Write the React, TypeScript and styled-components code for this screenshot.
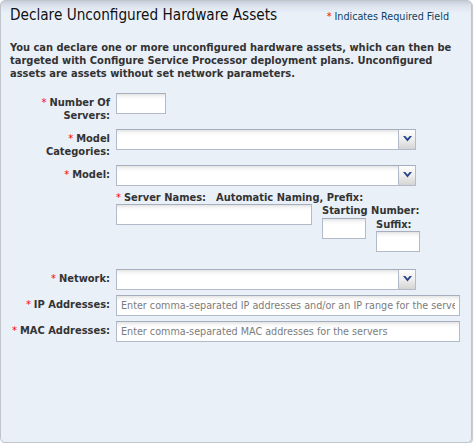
import React from "react";
import styled, { createGlobalStyle } from "styled-components";

const GlobalStyle = createGlobalStyle`
  html, body { margin: 0; padding: 0; background: #ffffff; }
  body { font-family: "DejaVu Sans Condensed", "DejaVu Sans", sans-serif; }
  * { box-sizing: border-box; }
`;

const FONT = `"DejaVu Sans Condensed", "DejaVu Sans", sans-serif`;

const Panel = styled.section`
  width: 472px;
  height: 443px;
  border: 1px solid #c0c4cb;
  border-radius: 5px;
  box-shadow: 1px 1px 1px rgba(0, 0, 0, 0.22);
  background: linear-gradient(to bottom, #c6ceda 0px, #dce3ed 5px, #eaf0f8 12px, #eaf0f8 100%);
  font-family: ${FONT};
  color: #333333;
  overflow: hidden;
`;

const Header = styled.header`
  display: flex;
  justify-content: space-between;
  align-items: baseline;
  padding: 5px 22px 0 9px;
`;

const Title = styled.h1`
  margin: 0;
  font-family: ${FONT};
  font-weight: normal;
  font-size: 15.2px;
  line-height: 18px;
  color: #111111;
`;

const RequiredNote = styled.div`
  font-size: 10.7px;
  line-height: 13px;
  color: #0e3f63;
`;

const Star = styled.span`
  color: #ff0000;
  font-weight: normal;
  margin-right: 3px;
`;

const Intro = styled.p`
  margin: 16.5px 0 0 9px;
  max-width: 452px;
  font-size: 11px;
  font-weight: bold;
  line-height: 13.3px;
  color: #333333;
`;

const Form = styled.div`
  display: grid;
  grid-template-columns: 109px 1fr;
  column-gap: 6px;
  row-gap: 5px;
  margin-top: 12.6px;
  align-items: start;
`;

const Label = styled.label`
  text-align: right;
  font-size: 11px;
  font-weight: bold;
  line-height: 13.3px;
  padding: 3px 0 1.4px;
  color: #333333;
`;

const FieldCell = styled.div`
  display: flex;
  min-width: 0;
`;

const TextInput = styled.input<{ $w: number }>`
  width: ${(p) => p.$w}px;
  height: 21px;
  margin: 0;
  padding: 0 4px;
  border: 1px solid #b3bac9;
  border-top-color: #a6adbd;
  border-radius: 0;
  background: linear-gradient(to bottom, #e4e4e4 0px, #f8f8f8 3px, #ffffff 6px);
  font-family: ${FONT};
  font-size: 10.7px;
  color: #333333;
  outline: none;
  &::placeholder {
    color: #7c7c7c;
    opacity: 1;
  }
`;

const SelectBox = styled.div`
  display: flex;
  width: 300px;
  height: 21px;
  border: 1px solid #b3bac9;
  border-top-color: #a6adbd;
  background: linear-gradient(to bottom, #e4e4e4 0px, #f8f8f8 3px, #ffffff 6px);
`;

const SelectValue = styled.div`
  flex: 1;
`;

const SelectButton = styled.div`
  width: 17px;
  border-left: 1px solid #b3bac9;
  background: linear-gradient(to bottom, #fdfdfd 0%, #eeeeee 50%, #d4d4d4 100%);
  display: flex;
  align-items: center;
  justify-content: center;
`;

const NamingBlock = styled.div`
  display: flex;
  flex-direction: column;
  padding-bottom: 12px;
`;

const NamingHeader = styled.div`
  display: flex;
  gap: 10px;
  font-size: 11px;
  font-weight: bold;
  line-height: 13.3px;
  white-space: nowrap;
`;

const NamingRow = styled.div`
  display: flex;
  align-items: flex-start;
  gap: 10px;
`;

const NamingGroup = styled.div<{ $drop: number }>`
  display: flex;
  flex-direction: column;
  width: 44px;
  padding-top: ${(p) => p.$drop * 13.3}px;
`;

const GroupLabel = styled.span`
  font-size: 11px;
  font-weight: bold;
  line-height: 13.3px;
  white-space: nowrap;
`;

const Chevron = () => (
  <svg width="9" height="6" viewBox="0 0 9 6">
    <polygon points="0,0 2.3,0 4.5,2.5 6.7,0 9,0 4.5,5.6" fill="#27468a" />
  </svg>
);

const Select = () => (
  <SelectBox>
    <SelectValue />
    <SelectButton>
      <Chevron />
    </SelectButton>
  </SelectBox>
);

const Req = ({ children }: { children: React.ReactNode }) => (
  <>
    <Star>*</Star>
    {children}
  </>
);

export default function App() {
  return (
    <>
      <GlobalStyle />
      <Panel>
        <Header>
          <Title>Declare Unconfigured Hardware Assets</Title>
          <RequiredNote>
            <Star>*</Star>Indicates Required Field
          </RequiredNote>
        </Header>
        <Intro>
          You can declare one or more unconfigured hardware assets, which can then be targeted with
          Configure Service Processor deployment plans. Unconfigured assets are assets without set
          network parameters.
        </Intro>
        <Form>
          <Label>
            <Req>Number Of Servers:</Req>
          </Label>
          <FieldCell>
            <TextInput $w={50} />
          </FieldCell>

          <Label>
            <Req>Model Categories:</Req>
          </Label>
          <FieldCell>
            <Select />
          </FieldCell>

          <Label>
            <Req>Model:</Req>
          </Label>
          <FieldCell>
            <Select />
          </FieldCell>

          <span />
          <NamingBlock>
            <NamingHeader>
              <span>
                <Req>Server Names:</Req>
              </span>
              <span>Automatic Naming, Prefix:</span>
            </NamingHeader>
            <NamingRow>
              <TextInput $w={196} />
              <NamingGroup $drop={0}>
                <GroupLabel>Starting Number:</GroupLabel>
                <TextInput $w={44} />
              </NamingGroup>
              <NamingGroup $drop={1}>
                <GroupLabel>Suffix:</GroupLabel>
                <TextInput $w={44} />
              </NamingGroup>
            </NamingRow>
          </NamingBlock>

          <Label>
            <Req>Network:</Req>
          </Label>
          <FieldCell>
            <Select />
          </FieldCell>

          <Label>
            <Req>IP Addresses:</Req>
          </Label>
          <FieldCell>
            <TextInput
              $w={344}
              placeholder="Enter comma-separated IP addresses and/or an IP range for the servers"
            />
          </FieldCell>

          <Label>
            <Req>MAC Addresses:</Req>
          </Label>
          <FieldCell>
            <TextInput $w={344} placeholder="Enter comma-separated MAC addresses for the servers" />
          </FieldCell>
        </Form>
      </Panel>
    </>
  );
}
